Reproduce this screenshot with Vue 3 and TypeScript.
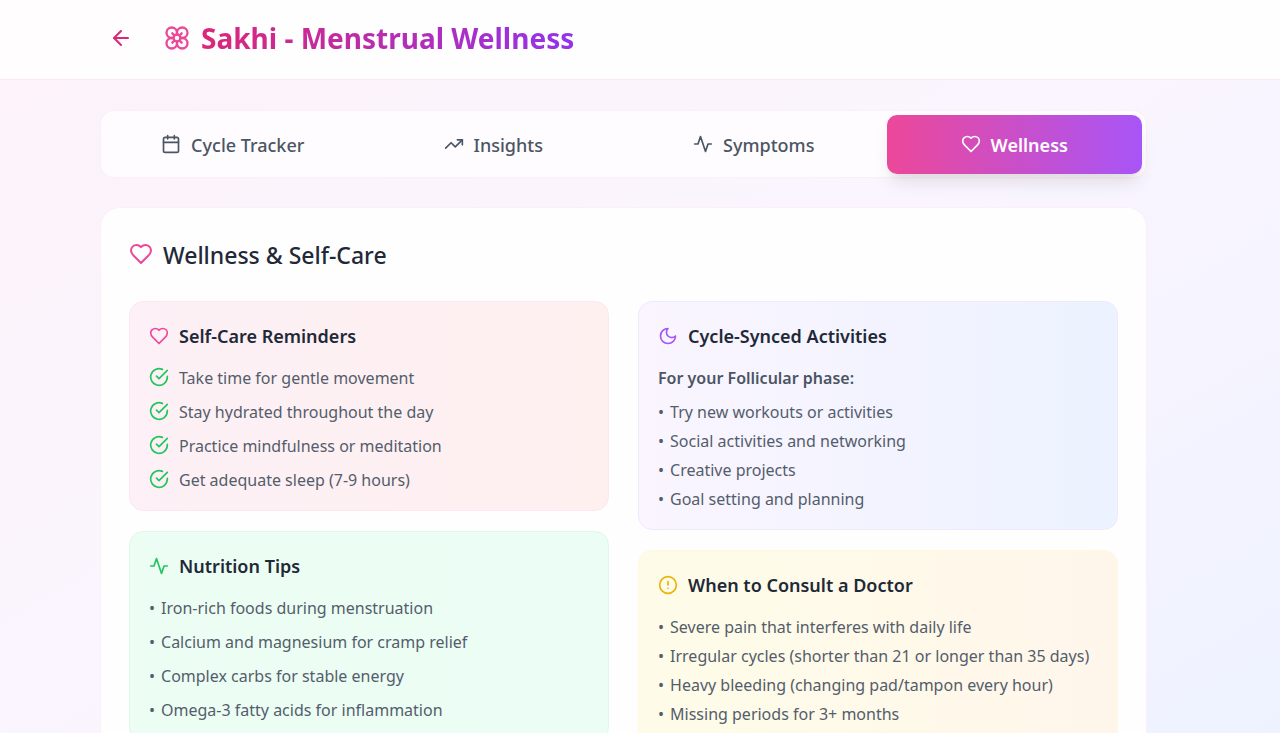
<script setup lang="ts">
import { h, ref } from 'vue'

interface Shape { d?: string; c?: number[]; r?: number[] }

const icons: Record<string, Shape[]> = {
  back: [{ d: 'm12 19-7-7 7-7' }, { d: 'M19 12H5' }],
  flower: [
    { c: [12, 12, 3] },
    { d: 'M12 16.5A4.5 4.5 0 1 1 7.5 12 4.5 4.5 0 1 1 12 7.5a4.5 4.5 0 1 1 4.5 4.5 4.5 4.5 0 1 1-4.5 4.5' },
    { d: 'M12 7.5V9M7.5 12H9M16.5 12H15M12 16.5V15M8 8l1.88 1.88M14.12 9.88 16 8M8 16l1.88-1.88M14.12 14.12 16 16' },
  ],
  calendar: [{ d: 'M8 2v4M16 2v4M3 10h18' }, { r: [3, 4, 18, 18, 2] }],
  trend: [{ d: 'm22 7-8.5 8.5-5-5L2 17' }, { d: 'M16 7h6v6' }],
  activity: [{ d: 'M22 12h-4l-3 9L9 3l-3 9H2' }],
  heart: [{ d: 'M19 14c1.49-1.46 3-3.21 3-5.5A5.5 5.5 0 0 0 16.5 3c-1.76 0-3 .5-4.5 2-1.5-1.5-2.74-2-4.5-2A5.5 5.5 0 0 0 2 8.5c0 2.3 1.5 4.05 3 5.5l7 7Z' }],
  moon: [{ d: 'M12 3a6 6 0 0 0 9 9 9 9 0 1 1-9-9Z' }],
  check: [{ d: 'M22 11.08V12a10 10 0 1 1-5.93-9.14' }, { d: 'm9 11 3 3L22 4' }],
  alert: [{ c: [12, 12, 10] }, { d: 'M12 8v4M12 16h.01' }],
}

const tabs = [
  { name: 'Cycle Tracker', icon: 'calendar' },
  { name: 'Insights', icon: 'trend' },
  { name: 'Symptoms', icon: 'activity' },
  { name: 'Wellness', icon: 'heart' },
]
const active = ref('Wellness')

interface Card { title: string; icon: string; tone: string; lead?: string; checks?: boolean; roomy?: boolean; items: string[] }

const columns: Card[][] = [
  [
    {
      title: 'Self-Care Reminders', icon: 'heart', tone: 'rose', checks: true, roomy: true,
      items: ['Take time for gentle movement', 'Stay hydrated throughout the day', 'Practice mindfulness or meditation', 'Get adequate sleep (7-9 hours)'],
    },
    {
      title: 'Nutrition Tips', icon: 'activity', tone: 'green', roomy: true,
      items: ['Iron-rich foods during menstruation', 'Calcium and magnesium for cramp relief', 'Complex carbs for stable energy', 'Omega-3 fatty acids for inflammation'],
    },
  ],
  [
    {
      title: 'Cycle-Synced Activities', icon: 'moon', tone: 'violet', lead: 'For your Follicular phase:',
      items: ['Try new workouts or activities', 'Social activities and networking', 'Creative projects', 'Goal setting and planning'],
    },
    {
      title: 'When to Consult a Doctor', icon: 'alert', tone: 'amber',
      items: ['Severe pain that interferes with daily life', 'Irregular cycles (shorter than 21 or longer than 35 days)', 'Heavy bleeding (changing pad/tampon every hour)', 'Missing periods for 3+ months'],
    },
  ],
]

const Icon = (props: { name: string }) =>
  h('svg', { viewBox: '0 0 24 24', class: 'icon', 'aria-hidden': 'true' },
    icons[props.name].map((s) =>
      s.c ? h('circle', { cx: s.c[0], cy: s.c[1], r: s.c[2] })
        : s.r ? h('rect', { x: s.r[0], y: s.r[1], width: s.r[2], height: s.r[3], rx: s.r[4] })
          : h('path', { d: s.d })))
Icon.props = ['name']
</script>

<template>
  <div class="page">
    <header class="top">
      <div class="wrap top-row">
        <button class="back" type="button" aria-label="Back"><Icon name="back" /></button>
        <div class="brand">
          <Icon name="flower" />
          <h1>Sakhi - Menstrual Wellness</h1>
        </div>
      </div>
    </header>

    <main class="wrap">
      <nav class="tabs" aria-label="Sections">
        <button
          v-for="t in tabs" :key="t.name" type="button"
          class="tab" :class="{ on: active === t.name }" @click="active = t.name"
        >
          <Icon :name="t.icon" /><span>{{ t.name }}</span>
        </button>
      </nav>

      <section class="panel">
        <h2><Icon name="heart" /><span>Wellness &amp; Self-Care</span></h2>
        <div class="columns">
          <div v-for="(col, i) in columns" :key="i" class="column">
            <article v-for="c in col" :key="c.title" class="card" :class="c.tone">
              <h3><Icon :name="c.icon" /><span>{{ c.title }}</span></h3>
              <p v-if="c.lead" class="lead">{{ c.lead }}</p>
              <ul :class="{ roomy: c.roomy, checks: c.checks }">
                <li v-for="item in c.items" :key="item">
                  <Icon v-if="c.checks" name="check" />
                  <span v-else>•</span>
                  <span>{{ item }}</span>
                </li>
              </ul>
            </article>
          </div>
        </div>
      </section>
    </main>
  </div>
</template>

<style>
body { margin: 0; }
</style>

<style scoped>
.page {
  box-sizing: border-box;
  height: 100vh;
  overflow: hidden;
  font-family: "Noto Sans", "Open Sans", sans-serif;
  color: #4b5563;
  background: linear-gradient(to bottom right, #fdf2f8, #faf5ff 50%, #eef2ff);
}
.wrap { padding: 0 133px 0 100px; }
h1, h2, h3, p, ul { margin: 0; padding: 0; }
ul { list-style: none; }
button { border: 0; background: none; font-family: inherit; cursor: pointer; }
.page :deep(.icon) {
  flex: none;
  width: 20px;
  height: 20px;
  fill: none;
  stroke: currentColor;
  stroke-width: 2;
  stroke-linecap: round;
  stroke-linejoin: round;
}
.top { background: rgba(255, 255, 255, 0.85); border-bottom: 1px solid #fce7f3; }
.top-row { display: flex; align-items: center; gap: 21px; height: 79px; box-sizing: border-box; padding-bottom: 3px; }
.back { display: flex; padding: 9px; color: #db2777; border-radius: 8px; }
.top .back :deep(.icon) { width: 24px; height: 24px; }
.brand { display: flex; align-items: center; gap: 10px; color: #ec4899; }
.top .brand :deep(.icon) { width: 28px; height: 28px; }
h1 {
  font-size: 28px;
  line-height: 38px;
  font-weight: 700;
  color: transparent;
  background: linear-gradient(to right, #db2777, #9333ea);
  -webkit-background-clip: text;
  background-clip: text;
}
.tabs {
  display: grid;
  grid-template-columns: repeat(4, 1fr);
  gap: 5px;
  margin-top: 30px;
  padding: 4px 4px 3px;
  background: rgba(255, 255, 255, 0.7);
  border: 1px solid rgba(252, 231, 243, 0.7);
  border-radius: 14px;
}
.tab {
  display: flex;
  align-items: center;
  justify-content: center;
  gap: 10px;
  height: 59px;
  padding: 0;
  border-radius: 10px;
  color: #4b5563;
  font-size: 18px;
  font-weight: 500;
}
.tab :deep(.icon) { margin-bottom: 2px; }
.tab.on {
  color: #fff;
  font-weight: 600;
  background: linear-gradient(to right, #ec4899, #a855f7);
  box-shadow: 0 12px 18px -4px rgba(0, 0, 0, 0.1), 0 5px 7px -5px rgba(0, 0, 0, 0.1);
}
.panel {
  margin-top: 29px;
  padding: 29px 28px 60px;
  background: rgba(255, 255, 255, 0.9);
  border: 1px solid rgba(252, 231, 243, 0.7);
  border-radius: 20px;
}
h2 { display: flex; align-items: center; gap: 10px; font-size: 23px; line-height: 36px; font-weight: 500; color: #1f2937; }
.panel h2 :deep(.icon) { width: 24px; height: 24px; margin-bottom: 3px; color: #ec4899; }
.columns { display: grid; grid-template-columns: 1fr 1fr; gap: 29px; margin-top: 28px; }
.column { display: flex; flex-direction: column; gap: 20px; }
.card { padding: 20px 19px 18px; border: 1px solid; border-radius: 14px; }
.rose { background: linear-gradient(to right, #fdf0f6, #fef0ef); border-color: #fce7f3; }
.green { background: linear-gradient(to right, #ecfdf3, #ecfdf5); border-color: #dff8ea; }
.violet { background: linear-gradient(to right, #faf5ff, #ecf2ff); border-color: #f0e9fd; }
.amber { background: linear-gradient(to right, #fefce8, #fff6eb); border-color: #fef9dc; }
h3 { display: flex; align-items: center; gap: 10px; margin-bottom: 15px; font-size: 18px; line-height: 29px; font-weight: 600; color: #1f2937; }
h3 :deep(.icon) { margin-bottom: 2px; }
.rose h3 :deep(.icon) { color: #ec4899; }
.green h3 :deep(.icon) { color: #22c55e; }
.violet h3 :deep(.icon) { color: #a855f7; }
.amber h3 :deep(.icon) { color: #eab308; }
.lead { margin-bottom: 10px; font-size: 16px; line-height: 24px; font-weight: 600; }
ul { display: grid; gap: 5px; font-size: 16px; line-height: 24px; color: #545d6b; }
ul.roomy { gap: 10px; }
li { display: flex; align-items: center; gap: 6px; }
.checks li { gap: 10px; }
li :deep(.icon) { margin-bottom: 2px; color: #22c55e; }
</style>
